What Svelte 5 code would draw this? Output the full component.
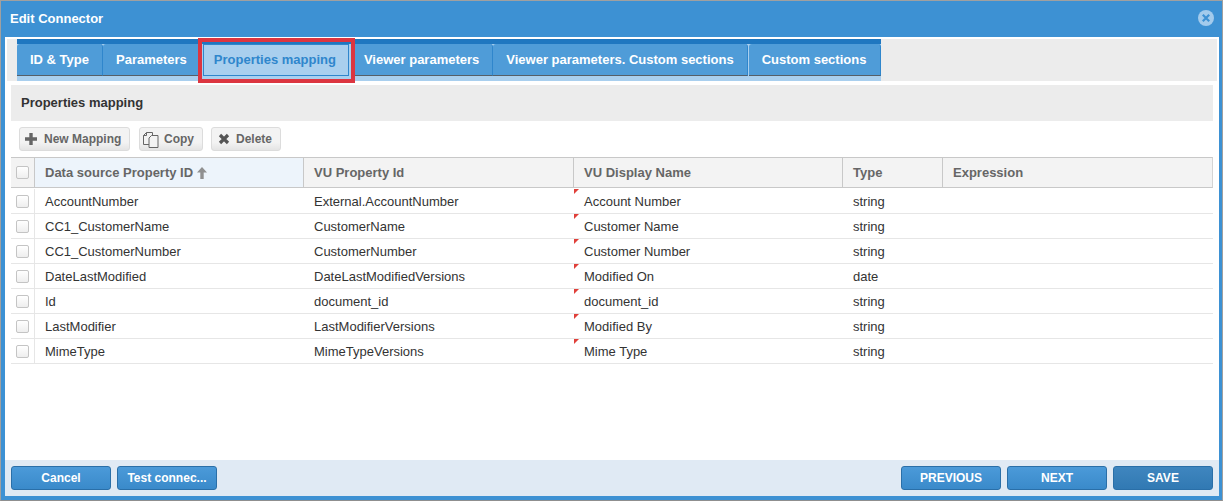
<script lang="ts">
  const tabs = [
    "ID & Type",
    "Parameters",
    "Properties mapping",
    "Viewer parameters",
    "Viewer parameters. Custom sections",
    "Custom sections",
  ];
  const activeTab = "Properties mapping";

  const columns = [
    { label: "Data source Property ID", sorted: true },
    { label: "VU Property Id" },
    { label: "VU Display Name" },
    { label: "Type" },
    { label: "Expression" },
  ];

  const rows = [
    ["AccountNumber", "External.AccountNumber", "Account Number", "string"],
    ["CC1_CustomerName", "CustomerName", "Customer Name", "string"],
    ["CC1_CustomerNumber", "CustomerNumber", "Customer Number", "string"],
    ["DateLastModified", "DateLastModifiedVersions", "Modified On", "date"],
    ["Id", "document_id", "document_id", "string"],
    ["LastModifier", "LastModifierVersions", "Modified By", "string"],
    ["MimeType", "MimeTypeVersions", "Mime Type", "string"],
  ];
</script>

<div class="dialog">
  <header class="title">
    <span>Edit Connector</span>
    <svg class="close" width="16" height="16" viewBox="0 0 16 16">
      <circle cx="8" cy="8" r="8" fill="#a3cbec" />
      <path d="M4.8 4.8l6.4 6.4M11.2 4.8l-6.4 6.4" stroke="#3d91d3" stroke-width="2.2" />
    </svg>
  </header>

  <div class="body">
    <div class="tabband">
      <div class="tabs">
        {#each tabs as tab}
          <div class="tab" class:active={tab === activeTab}>{tab}</div>
        {/each}
      </div>
    </div>

    <div class="content">
      <h2 class="section">Properties mapping</h2>

      <div class="toolbar">
        <button class="tool new">
          <svg width="14" height="14" viewBox="0 0 14 14">
            <path d="M7 1v12M1 7h12" stroke="#666" stroke-width="3.4" />
          </svg>
          New Mapping
        </button>
        <button class="tool copy">
          <svg width="16" height="17" viewBox="0 0 16 17" fill="#f3f3f3" stroke="#666" stroke-width="1">
            <path d="M.5 4.5L3.5 1.5H9.5V13.5H.5z" />
            <path d="M3.5 1.5V4.5H.5" fill="none" />
            <path d="M8.5 4.5H15V16.5H6V7z" />
          </svg>
          Copy
        </button>
        <button class="tool del">
          <svg width="12" height="12" viewBox="0 0 12 12">
            <path d="M2 2l8 8M10 2l-8 8" stroke="#555" stroke-width="3.2" />
          </svg>
          Delete
        </button>
      </div>

      <div class="grid head">
        <div class="check"><span class="box"></span></div>
        {#each columns as col}
          <div class="th" class:sorted={col.sorted}>
            {col.label}
            {#if col.sorted}
              <svg width="10" height="12" viewBox="0 0 10 12">
                <path d="M5 0L10 5.5H6.7V12H3.3V5.5H0z" fill="#909090" />
              </svg>
            {/if}
          </div>
        {/each}
      </div>

      {#each rows as row}
        <div class="grid row">
          <div class="check"><span class="box"></span></div>
          <div class="td">{row[0]}</div>
          <div class="td">{row[1]}</div>
          <div class="td dirty">{row[2]}</div>
          <div class="td">{row[3]}</div>
          <div class="td"></div>
        </div>
      {/each}
    </div>

    <footer class="footer">
      <button class="action">Cancel</button>
      <button class="action">Test connec...</button>
      <span class="spacer"></span>
      <button class="action caps">PREVIOUS</button>
      <button class="action caps">NEXT</button>
      <button class="action caps save">SAVE</button>
    </footer>
  </div>

  <div class="highlight"></div>
</div>

<style>
  :global(body) {
    margin: 0;
  }
  .dialog {
    position: relative;
    box-sizing: border-box;
    width: 1223px;
    height: 501px;
    display: flex;
    flex-direction: column;
    background: #3d91d3;
    border: 1px solid #a0a0a0;
    border-bottom-color: #8f8f8f;
    font-family: "Liberation Sans", Arial, sans-serif;
    overflow: hidden;
  }
  .title {
    height: 36px;
    flex: none;
    box-sizing: border-box;
    padding: 0 9px 2px;
    display: flex;
    align-items: center;
    justify-content: space-between;
    color: #fff;
    font-size: 13px;
    font-weight: bold;
  }
  .close {
    margin-right: -1px;
  }
  .body {
    flex: 1;
    margin: 0 3px 4px 4px;
    background: #fff;
    display: flex;
    flex-direction: column;
    min-height: 0;
  }
  .tabband {
    margin: 2px 2px 0 2px;
    height: 42px;
    padding-left: 10px;
    background: #ececec;
    flex: none;
  }
  .tabs {
    display: inline-flex;
    padding: 5px 0;
    height: 32px;
    background: linear-gradient(#1f77c0 5px, #a9cfee 5px);
    vertical-align: top;
  }
  .tab {
    height: 32px;
    box-sizing: border-box;
    display: flex;
    align-items: center;
    padding: 0 13px;
    color: #fff;
    font-size: 13px;
    font-weight: bold;
    background: #4f9cd8;
    border-right: 1px solid #2f86cc;
    border-bottom: 1px solid #555f68;
    border-radius: 3px 3px 0 0;
  }
  .tab:last-child {
    padding: 0 14px 0 13px;
    margin-left: 1px;
  }
  .tab.active {
    background: #a9cfee;
    color: #2f86cc;
    border: 1px solid #2f86cc;
    padding: 0 12px 1px 10px;
    margin: 0 2px;
    border-radius: 0;
  }
  .content {
    flex: 1;
    padding: 4px 6px 0 6px;
    min-height: 0;
  }
  .section {
    margin: 0;
    height: 36px;
    line-height: 36px;
    padding-left: 10px;
    background: #ececec;
    color: #333;
    font-size: 13px;
    font-weight: bold;
  }
  .toolbar {
    display: flex;
    gap: 9px;
    padding: 6px 0 6px 8px;
  }
  .tool {
    height: 24px;
    box-sizing: border-box;
    display: flex;
    align-items: center;
    gap: 6px;
    padding: 0 0 0 4px;
    border: 1px solid #dcdcdc;
    border-radius: 3px;
    background: linear-gradient(#f3f3f3 65%, #e4e4e4);
    color: #666;
    font: bold 12px "Liberation Sans", Arial, sans-serif;
  }
  .tool.new { width: 111px; }
  .tool.copy { width: 64px; gap: 5px; padding-left: 3px; }
  .tool.del { width: 70px; margin-left: -1px; padding-left: 6px; gap: 6px; }
  .grid {
    display: grid;
    grid-template-columns: 24px 269px 270px 269px 100px 1fr;
  }
  .head {
    height: 31px;
    box-sizing: border-box;
    margin-bottom: 1px;
    background: #f3f3f3;
    border-top: 1px solid #c8c8c8;
    border-bottom: 1px solid #c8c8c8;
    border-right: 1px solid #d4d4d4;
  }
  .check {
    display: flex;
    align-items: center;
    justify-content: center;
    border-right: 1px solid #e6e6e6;
  }
  .head .check {
    border-right-color: #c8c8c8;
  }
  .box {
    width: 11px;
    height: 11px;
    border: 1px solid #c4c4c4;
    border-radius: 2px;
    background: linear-gradient(#fff, #eeeeee);
  }
  .th {
    display: flex;
    align-items: center;
    gap: 4px;
    padding-left: 10px;
    border-right: 1px solid #c8c8c8;
    color: #666;
    font-size: 13px;
    font-weight: bold;
  }
  .th:last-child {
    border-right: none;
  }
  .th.sorted {
    background: #edf4fb;
  }
  .row {
    height: 25px;
    box-sizing: border-box;
    border-bottom: 1px solid #e6e6e6;
  }
  .td {
    position: relative;
    display: flex;
    align-items: center;
    padding-left: 10px;
    padding-top: 1px;
    color: #333;
    font-size: 13px;
  }
  .dirty::before {
    content: "";
    position: absolute;
    left: 0;
    top: 0;
    border-top: 5px solid #e0403a;
    border-right: 5px solid transparent;
  }
  .footer {
    flex: none;
    height: 36px;
    box-sizing: border-box;
    display: flex;
    align-items: center;
    gap: 6px;
    padding: 0 6px;
    background: #e0eaf4;
  }
  .spacer {
    flex: 1;
  }
  .action {
    width: 100px;
    height: 24px;
    padding: 0;
    border: 1px solid #2a6fa8;
    border-radius: 3px;
    background: linear-gradient(#4b9ad9, #3a8aca);
    color: #fff;
    font: bold 12px "Liberation Sans", Arial, sans-serif;
  }
  .action.save {
    background: linear-gradient(#3f86bf, #3179b3);
  }
  .highlight {
    position: absolute;
    left: 197px;
    top: 37px;
    width: 149px;
    height: 37px;
    border: 4px solid #dc3540;
  }
</style>
